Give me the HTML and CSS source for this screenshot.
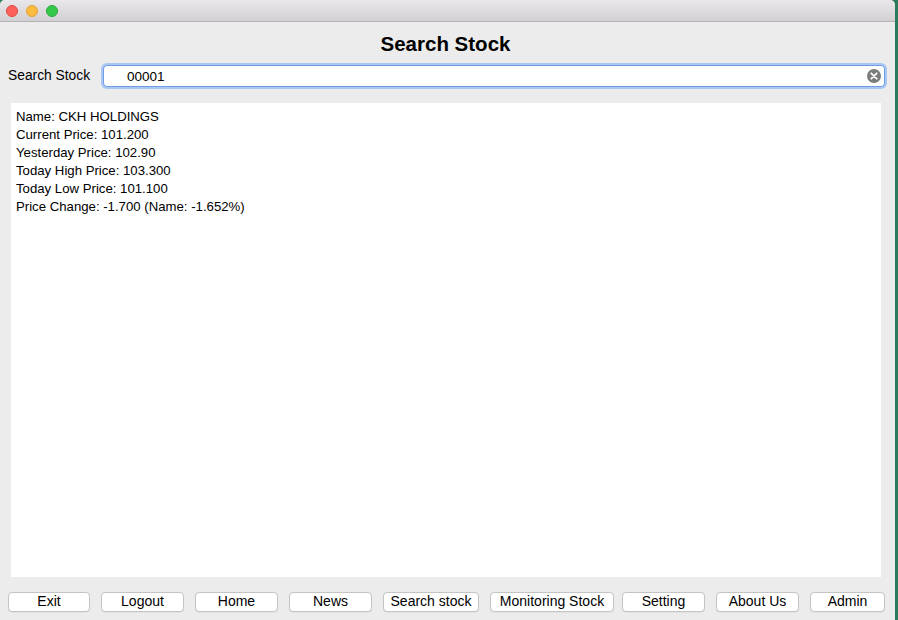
FILE: index.html
```html
<!DOCTYPE html>
<html>
<head>
<meta charset="utf-8">
<link rel="stylesheet" href="styles.css">
</head>
<body>
<div class="window">
  <div class="titlebar">
    <span class="light red"></span>
    <span class="light yellow"></span>
    <span class="light green"></span>
  </div>
  <div class="content">
    <h1 class="heading">Search Stock</h1>
    <div class="search-row">
      <label class="search-label">Search Stock</label>
      <div class="search-box">
        <span class="search-value">00001</span>
        <svg class="clear" width="14" height="14" viewBox="0 0 14 14">
          <circle cx="7" cy="7" r="7" fill="#7b7b7b"/>
          <path d="M4.3 4.3 L9.7 9.7 M9.7 4.3 L4.3 9.7" stroke="#fff" stroke-width="1.8" stroke-linecap="round"/>
        </svg>
      </div>
    </div>
    <div class="result">
      <div>Name: CKH HOLDINGS</div>
      <div>Current Price: 101.200</div>
      <div>Yesterday Price: 102.90</div>
      <div>Today High Price: 103.300</div>
      <div>Today Low Price: 101.100</div>
      <div>Price Change: -1.700 (Name: -1.652%)</div>
    </div>
    <div class="buttons">
      <button class="btn w82">Exit</button>
      <button class="btn w83">Logout</button>
      <button class="btn w83">Home</button>
      <button class="btn w83">News</button>
      <button class="btn w96">Search stock</button>
      <button class="btn w124">Monitoring Stock</button>
      <button class="btn w83 narrow-gap">Setting</button>
      <button class="btn w83">About Us</button>
      <button class="btn w75">Admin</button>
    </div>
  </div>
</div>
</body>
</html>
```
FILE: styles.css
```css
html, body {
  margin: 0;
  padding: 0;
}
body {
  width: 898px;
  height: 620px;
  background: #2b7a5b;
  font-family: "Liberation Sans", Arial, sans-serif;
  font-size: 13px;
  color: #000;
  overflow: hidden;
}
.window {
  width: 895px;
  height: 620px;
  background: #ececec;
  border-radius: 5px 5px 0 0;
  overflow: hidden;
  display: flex;
  flex-direction: column;
}
.titlebar {
  height: 22px;
  box-sizing: border-box;
  background: linear-gradient(#e9e7e9, #d2d0d2);
  border-bottom: 1px solid #b3b3b3;
  display: flex;
  align-items: center;
  gap: 8px;
  padding-left: 6px;
}
.light {
  width: 12px;
  height: 12px;
  border-radius: 50%;
  box-sizing: border-box;
}
.red { background: #fc605b; border: 1px solid #de4a45; }
.yellow { background: #fdbc40; border: 1px solid #dea236; }
.green { background: #34c84a; border: 1px solid #2aa83c; }
.content {
  flex: 1;
  display: flex;
  flex-direction: column;
}
.heading {
  margin: 0;
  height: 43px;
  box-sizing: border-box;
  padding: 10px 4px 0 0;
  text-align: center;
  font-size: 20.5px;
  line-height: 24px;
  font-weight: bold;
}
.search-row {
  display: flex;
  align-items: center;
  height: 22px;
  padding-left: 8px;
}
.search-label {
  width: 95px;
  font-size: 13.8px;
  position: relative;
  top: -1px;
}
.search-box {
  width: 782px;
  height: 22px;
  box-sizing: border-box;
  background: #fff;
  border: 1px solid #6e9de6;
  border-radius: 4px;
  box-shadow: 0 0 0 2px #a9c7f2;
  display: flex;
  align-items: center;
  padding-left: 23px;
  padding-right: 3px;
  font-size: 13.5px;
}
.search-value {
  flex: 1;
}
.clear {
  display: block;
}
.result {
  margin: 16px 14px 0 11px;
  background: #fff;
  height: 474px;
  box-sizing: border-box;
  padding: 5px 5px;
  line-height: 18px;
  font-size: 13.2px;
}
.buttons {
  display: flex;
  gap: 11px;
  padding-left: 8px;
  margin-top: 15px;
}
.btn {
  height: 20px;
  box-sizing: border-box;
  background: #fff;
  border: 1px solid #c4c4c4;
  border-radius: 4px;
  box-shadow: 0 0.5px 0.5px rgba(0,0,0,0.08);
  font-family: "Liberation Sans", Arial, sans-serif;
  font-size: 14px;
  color: #000;
  padding: 0 0 1px;
  line-height: 17px;
}
.w82 { width: 82px; }
.w83 { width: 83px; }
.w96 { width: 96px; }
.w124 { width: 124px; }
.w75 { width: 75px; }
.narrow-gap { margin-left: -3px; }
```
